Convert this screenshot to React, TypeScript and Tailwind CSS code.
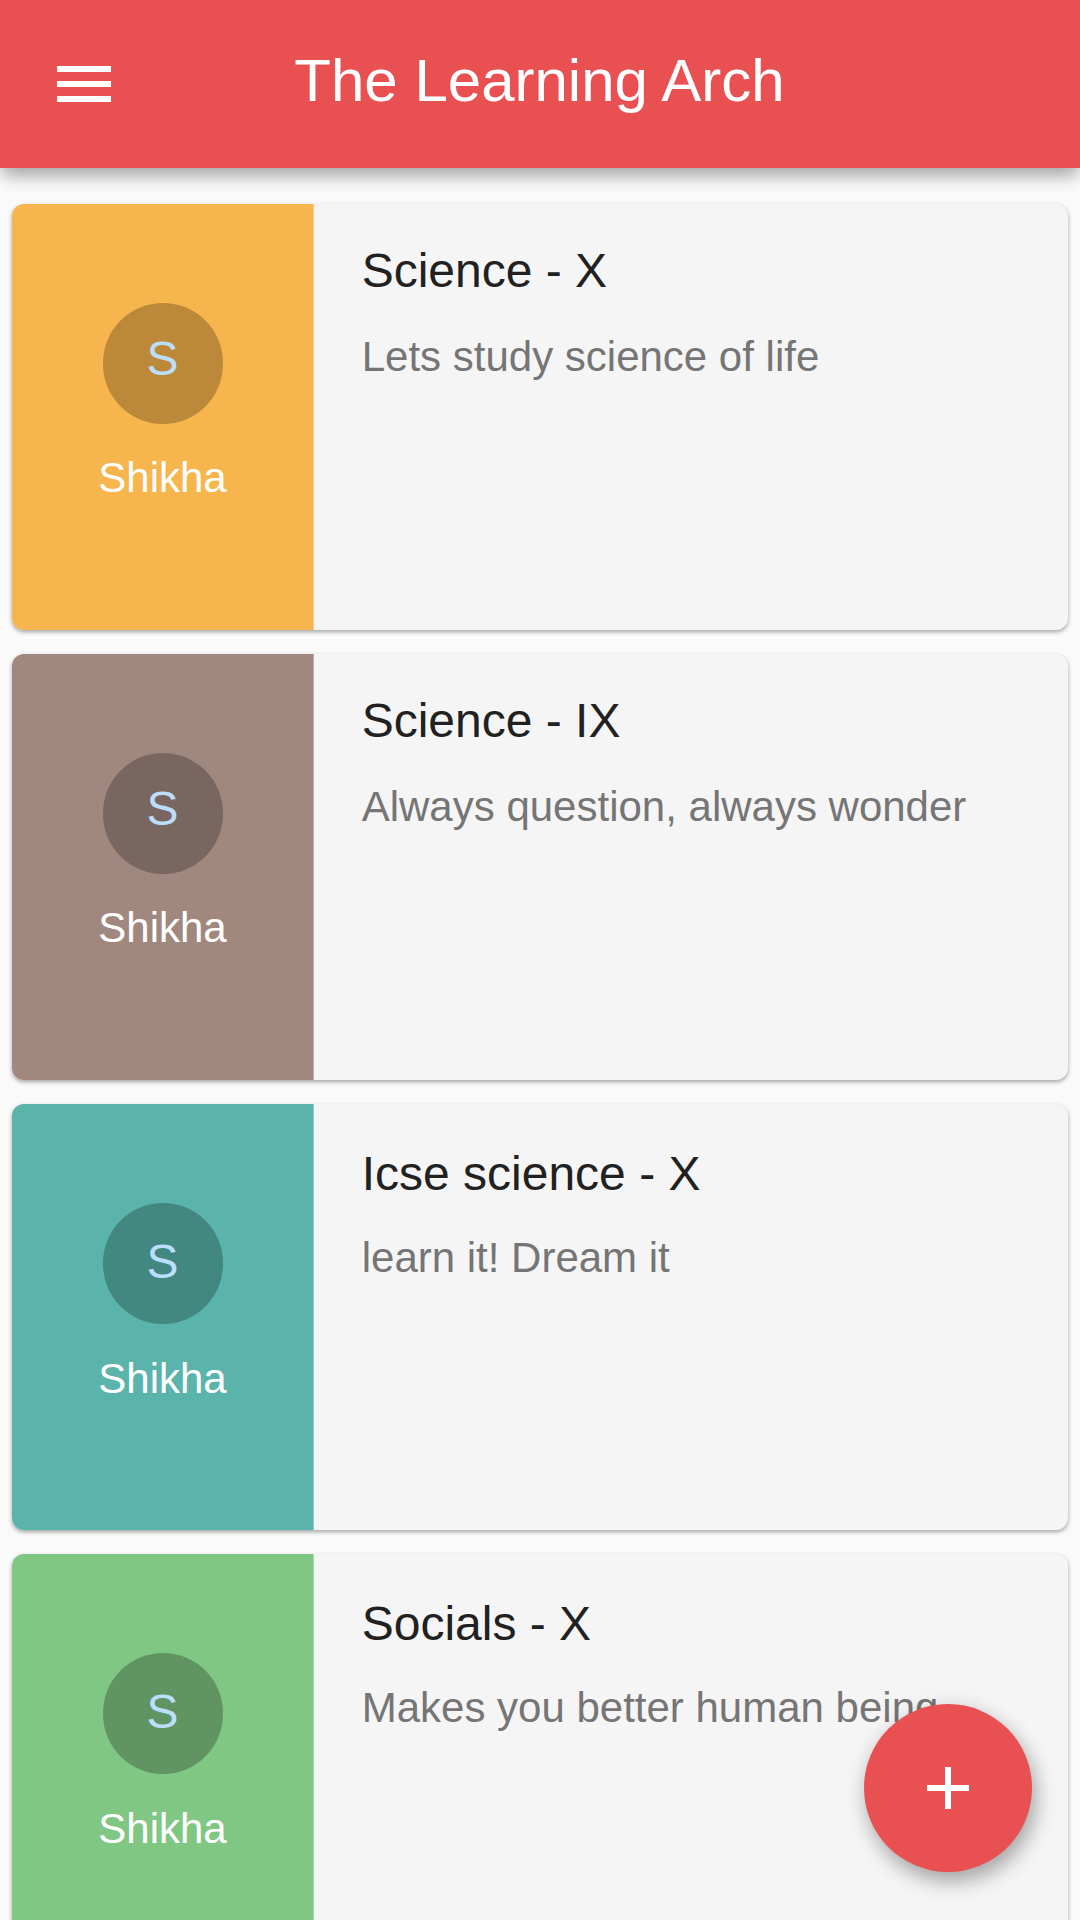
const courses = [
  { title: 'Science - X', text: 'Lets study science of life', color: 'bg-[#f7b54d]', dot: 'bg-[#bb8939]', pad: 'pt-[37px]', body: 'mt-[32px]', initial: 'pb-[10px]', name: 'mt-[30px]' },
  { title: 'Science - IX', text: 'Always question, always wonder', color: 'bg-[#a1887f]', dot: 'bg-[#796660]', pad: 'pt-[37px]', body: 'mt-[32px]', initial: 'pb-[10px]', name: 'mt-[30px]' },
  { title: 'Icse science - X', text: 'learn it! Dream it', color: 'bg-[#5ab4ac]', dot: 'bg-[#428780]', pad: 'pt-[40px]', body: 'mt-[30px]', initial: 'pb-[4px]', name: 'mt-[31px]' },
  { title: 'Socials - X', text: 'Makes you better human being', color: 'bg-[#81c784]', dot: 'bg-[#609463]', pad: 'pt-[40px]', body: 'mt-[30px]', initial: 'pb-[4px]', name: 'mt-[31px]' },
];

export default function App() {
  return (
    <div className="relative h-[1920px] w-[1080px] overflow-hidden bg-[#fafafa] font-['Liberation_Sans',sans-serif]">
      <header className="relative z-10 grid h-[168px] grid-cols-[168px_1fr_168px] items-center bg-[#e95052] shadow-[0_10px_16px_-2px_rgba(0,0,0,0.3),0_2px_18px_rgba(0,0,0,0.08)]">
        <button aria-label="Menu" className="flex justify-center">
          <svg width="54" height="36" viewBox="0 0 54 36" fill="#fff">
            <path d="M0 0h54v6H0zM0 15h54v6H0zM0 30h54v6H0z" />
          </svg>
        </button>
        <h1 className="-mt-[6px] whitespace-nowrap pr-[1px] text-center text-[60px] leading-[72px] text-white">The Learning Arch</h1>
      </header>
      <main className="flex flex-col gap-[24px] px-[12px] pt-[36px]">
        {courses.map((c) => (
          <article key={c.title} className="flex h-[426px] shrink-0 overflow-hidden rounded-[12px] bg-[#f5f5f5] shadow-[0_2px_4px_rgba(0,0,0,0.35)]">
            <div className={`flex w-[302px] shrink-0 flex-col items-center border-r border-white/30 pt-[99px] ${c.color}`}>
              <div className={`flex h-[121px] w-[120px] items-center justify-center rounded-full text-[48px] leading-[56px] text-[#bbdefb] ${c.dot} ${c.initial}`}>S</div>
              <p className={`text-[42px] leading-[48px] text-white ${c.name}`}>Shikha</p>
            </div>
            <div className={`pl-[47.7px] ${c.pad}`}>
              <h2 className="text-[48px] leading-[60px] text-[#212121]">{c.title}</h2>
              <p className={`text-[42px] leading-[48px] text-[#757575] ${c.body}`}>{c.text}</p>
            </div>
          </article>
        ))}
      </main>
      <button aria-label="Add" className="absolute right-[48px] bottom-[48px] z-20 flex h-[168px] w-[168px] items-center justify-center rounded-full bg-[#e95052] shadow-[4px_10px_20px_rgba(0,0,0,0.3),0_0_24px_rgba(0,0,0,0.06)]">
        <svg width="42" height="42" viewBox="0 0 42 42" fill="#fff">
          <path d="M18 0h6v18h18v6H24v18h-6V24H0v-6h18z" />
        </svg>
      </button>
    </div>
  );
}
